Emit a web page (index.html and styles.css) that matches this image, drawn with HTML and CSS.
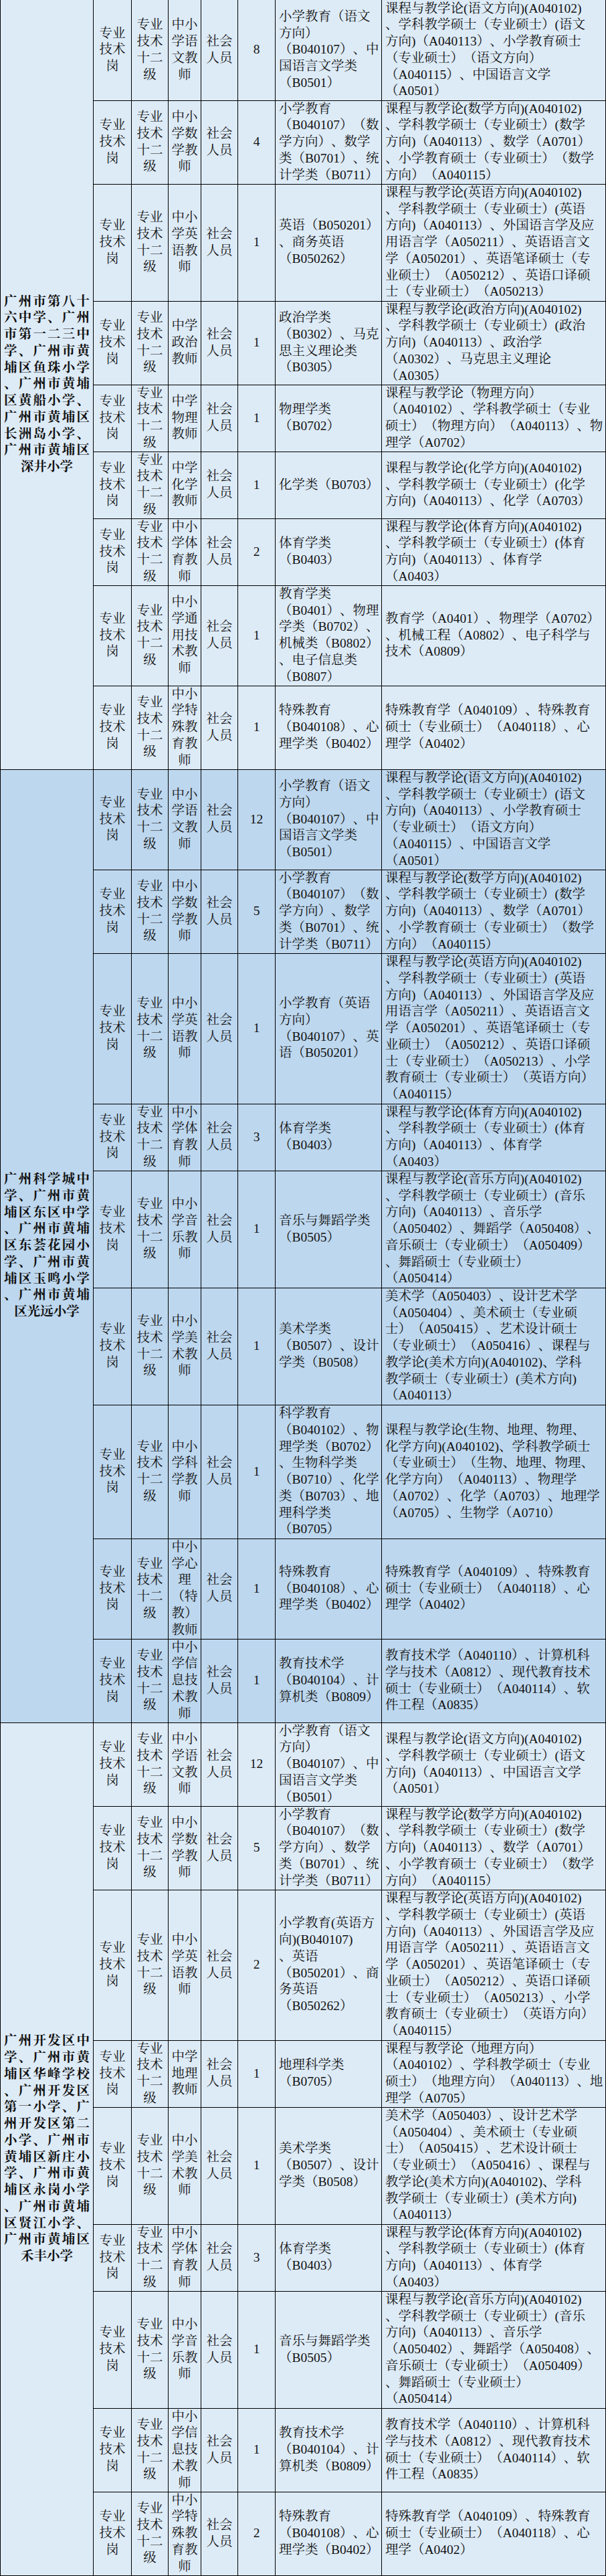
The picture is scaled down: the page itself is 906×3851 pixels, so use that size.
FILE: index.html
```html
<!DOCTYPE html>
<html lang="zh-CN">
<head>
<meta charset="utf-8">
<title>招聘岗位表</title>
<link rel="stylesheet" href="styles.css">
</head>
<body>
<table class="t">
<colgroup>
<col class="w1"><col class="w2"><col class="w3"><col class="w4"><col class="w5"><col class="w6"><col class="w7"><col class="w8">
</colgroup>
<tbody class="lt">
<tr class="n6">
<td class="c1" rowspan="9"><div>广州市第八十</div><div>六中学、广州</div><div>市第一二三中</div><div>学、广州市黄</div><div>埔区鱼珠小学</div><div>、广州市黄埔</div><div>区黄船小学、</div><div>广州市黄埔区</div><div>长洲岛小学、</div><div>广州市黄埔区</div><div>深井小学</div></td>
<td class="c2">专业<br>技术<br>岗</td><td class="c3">专业<br>技术<br>十二<br>级</td><td class="c4">中小<br>学语<br>文教<br>师</td><td class="c5">社会<br>人员</td><td class="c6">8</td>
<td class="c7">小学教育（语文<br>方向）<br>（B040107）、中<br>国语言文学类<br>（B0501）</td>
<td class="c8">课程与教学论(语文方向)(A040102)<br>、学科教学硕士（专业硕士）(语文<br>方向)（A040113）、小学教育硕士<br>（专业硕士）（语文方向）<br>（A040115）、中国语言文学<br>（A0501）</td>
</tr>
<tr class="n5">
<td class="c2">专业<br>技术<br>岗</td><td class="c3">专业<br>技术<br>十二<br>级</td><td class="c4">中小<br>学数<br>学教<br>师</td><td class="c5">社会<br>人员</td><td class="c6">4</td>
<td class="c7">小学教育<br>（B040107）（数<br>学方向）、数学<br>类（B0701）、统<br>计学类（B0711）</td>
<td class="c8">课程与教学论(数学方向)(A040102)<br>、学科教学硕士（专业硕士）(数学<br>方向)（A040113）、数学（A0701）<br>、小学教育硕士（专业硕士）（数学<br>方向）（A040115）</td>
</tr>
<tr class="n7">
<td class="c2">专业<br>技术<br>岗</td><td class="c3">专业<br>技术<br>十二<br>级</td><td class="c4">中小<br>学英<br>语教<br>师</td><td class="c5">社会<br>人员</td><td class="c6">1</td>
<td class="c7">英语（B050201）<br>、商务英语<br>（B050262）</td>
<td class="c8">课程与教学论(英语方向)(A040102)<br>、学科教学硕士（专业硕士）(英语<br>方向)（A040113）、外国语言学及应<br>用语言学（A050211）、英语语言文<br>学（A050201）、英语笔译硕士（专<br>业硕士）（A050212）、英语口译硕<br>士（专业硕士）（A050213）</td>
</tr>
<tr class="n5">
<td class="c2">专业<br>技术<br>岗</td><td class="c3">专业<br>技术<br>十二<br>级</td><td class="c4">中学<br>政治<br>教师</td><td class="c5">社会<br>人员</td><td class="c6">1</td>
<td class="c7">政治学类<br>（B0302）、马克<br>思主义理论类<br>（B0305）</td>
<td class="c8">课程与教学论(政治方向)(A040102)<br>、学科教学硕士（专业硕士）(政治<br>方向)（A040113）、政治学<br>（A0302）、马克思主义理论<br>（A0305）</td>
</tr>
<tr class="n4">
<td class="c2">专业<br>技术<br>岗</td><td class="c3">专业<br>技术<br>十二<br>级</td><td class="c4">中学<br>物理<br>教师</td><td class="c5">社会<br>人员</td><td class="c6">1</td>
<td class="c7">物理学类<br>（B0702）</td>
<td class="c8">课程与教学论（物理方向）<br>（A040102）、学科教学硕士（专业<br>硕士）（物理方向）（A040113）、物<br>理学（A0702）</td>
</tr>
<tr class="n4">
<td class="c2">专业<br>技术<br>岗</td><td class="c3">专业<br>技术<br>十二<br>级</td><td class="c4">中学<br>化学<br>教师</td><td class="c5">社会<br>人员</td><td class="c6">1</td>
<td class="c7">化学类（B0703）</td>
<td class="c8">课程与教学论(化学方向)(A040102)<br>、学科教学硕士（专业硕士）(化学<br>方向)（A040113）、化学（A0703）</td>
</tr>
<tr class="n4">
<td class="c2">专业<br>技术<br>岗</td><td class="c3">专业<br>技术<br>十二<br>级</td><td class="c4">中小<br>学体<br>育教<br>师</td><td class="c5">社会<br>人员</td><td class="c6">2</td>
<td class="c7">体育学类<br>（B0403）</td>
<td class="c8">课程与教学论(体育方向)(A040102)<br>、学科教学硕士（专业硕士）(体育<br>方向)（A040113）、体育学<br>（A0403）</td>
</tr>
<tr class="n6">
<td class="c2">专业<br>技术<br>岗</td><td class="c3">专业<br>技术<br>十二<br>级</td><td class="c4">中小<br>学通<br>用技<br>术教<br>师</td><td class="c5">社会<br>人员</td><td class="c6">1</td>
<td class="c7">教育学类<br>（B0401）、物理<br>学类（B0702）、<br>机械类（B0802）<br>、电子信息类<br>（B0807）</td>
<td class="c8">教育学（A0401）、物理学（A0702）<br>、机械工程（A0802）、电子科学与<br>技术（A0809）</td>
</tr>
<tr class="n5">
<td class="c2">专业<br>技术<br>岗</td><td class="c3">专业<br>技术<br>十二<br>级</td><td class="c4">中小<br>学特<br>殊教<br>育教<br>师</td><td class="c5">社会<br>人员</td><td class="c6">1</td>
<td class="c7">特殊教育<br>（B040108）、心<br>理学类（B0402）</td>
<td class="c8">特殊教育学（A040109）、特殊教育<br>硕士（专业硕士）（A040118）、心<br>理学（A0402）</td>
</tr>
</tbody>
<tbody class="dk">
<tr class="n6">
<td class="c1" rowspan="9"><div>广州科学城中</div><div>学、广州市黄</div><div>埔区东区中学</div><div>、广州市黄埔</div><div>区东荟花园小</div><div>学、广州市黄</div><div>埔区玉鸣小学</div><div>、广州市黄埔</div><div>区光远小学</div></td>
<td class="c2">专业<br>技术<br>岗</td><td class="c3">专业<br>技术<br>十二<br>级</td><td class="c4">中小<br>学语<br>文教<br>师</td><td class="c5">社会<br>人员</td><td class="c6">12</td>
<td class="c7">小学教育（语文<br>方向）<br>（B040107）、中<br>国语言文学类<br>（B0501）</td>
<td class="c8">课程与教学论(语文方向)(A040102)<br>、学科教学硕士（专业硕士）(语文<br>方向)（A040113）、小学教育硕士<br>（专业硕士）（语文方向）<br>（A040115）、中国语言文学<br>（A0501）</td>
</tr>
<tr class="n5">
<td class="c2">专业<br>技术<br>岗</td><td class="c3">专业<br>技术<br>十二<br>级</td><td class="c4">中小<br>学数<br>学教<br>师</td><td class="c5">社会<br>人员</td><td class="c6">5</td>
<td class="c7">小学教育<br>（B040107）（数<br>学方向）、数学<br>类（B0701）、统<br>计学类（B0711）</td>
<td class="c8">课程与教学论(数学方向)(A040102)<br>、学科教学硕士（专业硕士）(数学<br>方向)（A040113）、数学（A0701）<br>、小学教育硕士（专业硕士）（数学<br>方向）（A040115）</td>
</tr>
<tr class="n9">
<td class="c2">专业<br>技术<br>岗</td><td class="c3">专业<br>技术<br>十二<br>级</td><td class="c4">中小<br>学英<br>语教<br>师</td><td class="c5">社会<br>人员</td><td class="c6">1</td>
<td class="c7">小学教育（英语<br>方向）<br>（B040107）、英<br>语（B050201）</td>
<td class="c8">课程与教学论(英语方向)(A040102)<br>、学科教学硕士（专业硕士）(英语<br>方向)（A040113）、外国语言学及应<br>用语言学（A050211）、英语语言文<br>学（A050201）、英语笔译硕士（专<br>业硕士）（A050212）、英语口译硕<br>士（专业硕士）（A050213）、小学<br>教育硕士（专业硕士）（英语方向）<br>（A040115）</td>
</tr>
<tr class="n4">
<td class="c2">专业<br>技术<br>岗</td><td class="c3">专业<br>技术<br>十二<br>级</td><td class="c4">中小<br>学体<br>育教<br>师</td><td class="c5">社会<br>人员</td><td class="c6">3</td>
<td class="c7">体育学类<br>（B0403）</td>
<td class="c8">课程与教学论(体育方向)(A040102)<br>、学科教学硕士（专业硕士）(体育<br>方向)（A040113）、体育学<br>（A0403）</td>
</tr>
<tr class="n7">
<td class="c2">专业<br>技术<br>岗</td><td class="c3">专业<br>技术<br>十二<br>级</td><td class="c4">中小<br>学音<br>乐教<br>师</td><td class="c5">社会<br>人员</td><td class="c6">1</td>
<td class="c7">音乐与舞蹈学类<br>（B0505）</td>
<td class="c8">课程与教学论(音乐方向)(A040102)<br>、学科教学硕士（专业硕士）(音乐<br>方向)（A040113）、音乐学<br>（A050402）、舞蹈学（A050408）、<br>音乐硕士（专业硕士）（A050409）<br>、舞蹈硕士（专业硕士）<br>（A050414）</td>
</tr>
<tr class="n7">
<td class="c2">专业<br>技术<br>岗</td><td class="c3">专业<br>技术<br>十二<br>级</td><td class="c4">中小<br>学美<br>术教<br>师</td><td class="c5">社会<br>人员</td><td class="c6">1</td>
<td class="c7">美术学类<br>（B0507）、设计<br>学类（B0508）</td>
<td class="c8">美术学（A050403）、设计艺术学<br>（A050404）、美术硕士（专业硕<br>士）（A050415）、艺术设计硕士<br>（专业硕士）（A050416）、课程与<br>教学论(美术方向)(A040102)、学科<br>教学硕士（专业硕士）(美术方向)<br>（A040113）</td>
</tr>
<tr class="n8">
<td class="c2">专业<br>技术<br>岗</td><td class="c3">专业<br>技术<br>十二<br>级</td><td class="c4">中小<br>学科<br>学教<br>师</td><td class="c5">社会<br>人员</td><td class="c6">1</td>
<td class="c7">科学教育<br>（B040102）、物<br>理学类（B0702）<br>、生物科学类<br>（B0710）、化学<br>类（B0703）、地<br>理科学类<br>（B0705）</td>
<td class="c8">课程与教学论(生物、地理、物理、<br>化学方向)(A040102)、学科教学硕士<br>（专业硕士）（生物、地理、物理、<br>化学方向）（A040113）、物理学<br>（A0702）、化学（A0703）、地理学<br>（A0705）、生物学（A0710）</td>
</tr>
<tr class="n6">
<td class="c2">专业<br>技术<br>岗</td><td class="c3">专业<br>技术<br>十二<br>级</td><td class="c4">中小<br>学心<br>理<br>（特<br>教）<br>教师</td><td class="c5">社会<br>人员</td><td class="c6">1</td>
<td class="c7">特殊教育<br>（B040108）、心<br>理学类（B0402）</td>
<td class="c8">特殊教育学（A040109）、特殊教育<br>硕士（专业硕士）（A040118）、心<br>理学（A0402）</td>
</tr>
<tr class="n5">
<td class="c2">专业<br>技术<br>岗</td><td class="c3">专业<br>技术<br>十二<br>级</td><td class="c4">中小<br>学信<br>息技<br>术教<br>师</td><td class="c5">社会<br>人员</td><td class="c6">1</td>
<td class="c7">教育技术学<br>（B040104）、计<br>算机类（B0809）</td>
<td class="c8">教育技术学（A040110）、计算机科<br>学与技术（A0812）、现代教育技术<br>硕士（专业硕士）（A040114）、软<br>件工程（A0835）</td>
</tr>
</tbody>
<tbody class="lt">
<tr class="n5">
<td class="c1" rowspan="9"><div>广州开发区中</div><div>学、广州市黄</div><div>埔区华峰学校</div><div>、广州开发区</div><div>第一小学、广</div><div>州开发区第二</div><div>小学、广州市</div><div>黄埔区新庄小</div><div>学、广州市黄</div><div>埔区永岗小学</div><div>、广州市黄埔</div><div>区贤江小学、</div><div>广州市黄埔区</div><div>禾丰小学</div></td>
<td class="c2">专业<br>技术<br>岗</td><td class="c3">专业<br>技术<br>十二<br>级</td><td class="c4">中小<br>学语<br>文教<br>师</td><td class="c5">社会<br>人员</td><td class="c6">12</td>
<td class="c7">小学教育（语文<br>方向）<br>（B040107）、中<br>国语言文学类<br>（B0501）</td>
<td class="c8">课程与教学论(语文方向)(A040102)<br>、学科教学硕士（专业硕士）(语文<br>方向)（A040113）、中国语言文学<br>（A0501）</td>
</tr>
<tr class="n5">
<td class="c2">专业<br>技术<br>岗</td><td class="c3">专业<br>技术<br>十二<br>级</td><td class="c4">中小<br>学数<br>学教<br>师</td><td class="c5">社会<br>人员</td><td class="c6">5</td>
<td class="c7">小学教育<br>（B040107）（数<br>学方向）、数学<br>类（B0701）、统<br>计学类（B0711）</td>
<td class="c8">课程与教学论(数学方向)(A040102)<br>、学科教学硕士（专业硕士）(数学<br>方向)（A040113）、数学（A0701）<br>、小学教育硕士（专业硕士）（数学<br>方向）（A040115）</td>
</tr>
<tr class="n9">
<td class="c2">专业<br>技术<br>岗</td><td class="c3">专业<br>技术<br>十二<br>级</td><td class="c4">中小<br>学英<br>语教<br>师</td><td class="c5">社会<br>人员</td><td class="c6">2</td>
<td class="c7">小学教育(英语方<br>向)(B040107)<br>、英语<br>（B050201）、商<br>务英语<br>（B050262）</td>
<td class="c8">课程与教学论(英语方向)(A040102)<br>、学科教学硕士（专业硕士）(英语<br>方向)（A040113）、外国语言学及应<br>用语言学（A050211）、英语语言文<br>学（A050201）、英语笔译硕士（专<br>业硕士）（A050212）、英语口译硕<br>士（专业硕士）（A050213）、小学<br>教育硕士（专业硕士）（英语方向）<br>（A040115）</td>
</tr>
<tr class="n4">
<td class="c2">专业<br>技术<br>岗</td><td class="c3">专业<br>技术<br>十二<br>级</td><td class="c4">中学<br>地理<br>教师</td><td class="c5">社会<br>人员</td><td class="c6">1</td>
<td class="c7">地理科学类<br>（B0705）</td>
<td class="c8">课程与教学论（地理方向）<br>（A040102）、学科教学硕士（专业<br>硕士）（地理方向）（A040113）、地<br>理学（A0705）</td>
</tr>
<tr class="n7">
<td class="c2">专业<br>技术<br>岗</td><td class="c3">专业<br>技术<br>十二<br>级</td><td class="c4">中小<br>学美<br>术教<br>师</td><td class="c5">社会<br>人员</td><td class="c6">1</td>
<td class="c7">美术学类<br>（B0507）、设计<br>学类（B0508）</td>
<td class="c8">美术学（A050403）、设计艺术学<br>（A050404）、美术硕士（专业硕<br>士）（A050415）、艺术设计硕士<br>（专业硕士）（A050416）、课程与<br>教学论(美术方向)(A040102)、学科<br>教学硕士（专业硕士）(美术方向)<br>（A040113）</td>
</tr>
<tr class="n4">
<td class="c2">专业<br>技术<br>岗</td><td class="c3">专业<br>技术<br>十二<br>级</td><td class="c4">中小<br>学体<br>育教<br>师</td><td class="c5">社会<br>人员</td><td class="c6">3</td>
<td class="c7">体育学类<br>（B0403）</td>
<td class="c8">课程与教学论(体育方向)(A040102)<br>、学科教学硕士（专业硕士）(体育<br>方向)（A040113）、体育学<br>（A0403）</td>
</tr>
<tr class="n7">
<td class="c2">专业<br>技术<br>岗</td><td class="c3">专业<br>技术<br>十二<br>级</td><td class="c4">中小<br>学音<br>乐教<br>师</td><td class="c5">社会<br>人员</td><td class="c6">1</td>
<td class="c7">音乐与舞蹈学类<br>（B0505）</td>
<td class="c8">课程与教学论(音乐方向)(A040102)<br>、学科教学硕士（专业硕士）(音乐<br>方向)（A040113）、音乐学<br>（A050402）、舞蹈学（A050408）、<br>音乐硕士（专业硕士）（A050409）<br>、舞蹈硕士（专业硕士）<br>（A050414）</td>
</tr>
<tr class="n5">
<td class="c2">专业<br>技术<br>岗</td><td class="c3">专业<br>技术<br>十二<br>级</td><td class="c4">中小<br>学信<br>息技<br>术教<br>师</td><td class="c5">社会<br>人员</td><td class="c6">1</td>
<td class="c7">教育技术学<br>（B040104）、计<br>算机类（B0809）</td>
<td class="c8">教育技术学（A040110）、计算机科<br>学与技术（A0812）、现代教育技术<br>硕士（专业硕士）（A040114）、软<br>件工程（A0835）</td>
</tr>
<tr class="n5">
<td class="c2">专业<br>技术<br>岗</td><td class="c3">专业<br>技术<br>十二<br>级</td><td class="c4">中小<br>学特<br>殊教<br>育教<br>师</td><td class="c5">社会<br>人员</td><td class="c6">2</td>
<td class="c7">特殊教育<br>（B040108）、心<br>理学类（B0402）</td>
<td class="c8">特殊教育学（A040109）、特殊教育<br>硕士（专业硕士）（A040118）、心<br>理学（A0402）</td>
</tr>
</tbody>
</table>
</body>
</html>
```
FILE: styles.css
```css
html, body {
  margin: 0;
  padding: 0;
  background: #ffffff;
}

body {
  font-family: "Liberation Serif", "Noto Serif CJK SC", "Noto Sans CJK SC", serif;
  font-size: 19.5px;
  line-height: 24.75px;
  color: #111111;
  text-spacing-trim: space-all;
}

.t {
  border-collapse: collapse;
  table-layout: fixed;
  width: 905px;
}

.w1 { width: 139px; }
.w2 { width: 57px; }
.w3 { width: 55px; }
.w4 { width: 49px; }
.w5 { width: 55px; }
.w6 { width: 56px; }
.w7 { width: 159px; }
.w8 { width: 335px; }

.t td {
  border: 1px solid #000000;
  padding: 0 5px;
  vertical-align: middle;
  white-space: nowrap;
  overflow: visible;
}

.lt td { background: #ddebf7; }
.dk td { background: #bdd7ee; }

.t tbody:first-of-type tr:first-child td { border-top-style: hidden; }

.n4 { height: 100px; }
.n5 { height: 125px; }
.n6 { height: 150px; }
.n7 { height: 175px; }
.n8 { height: 200px; }
.n9 { height: 225px; }

.c1 {
  padding: 0 8px 0 6px;
  font-weight: 700;
  white-space: normal;
  border-left-style: hidden;
}

.c1 div {
  text-align: justify;
  text-align-last: justify;
}

.c1 div:last-child {
  text-align-last: center;
}

.c2, .c3, .c4, .c5, .c6 {
  text-align: center;
}

.t .c4 { padding: 0; }

.c7 {
  text-align: left;
}

.c8 {
  text-align: left;
  padding-left: 4px;
}
```
